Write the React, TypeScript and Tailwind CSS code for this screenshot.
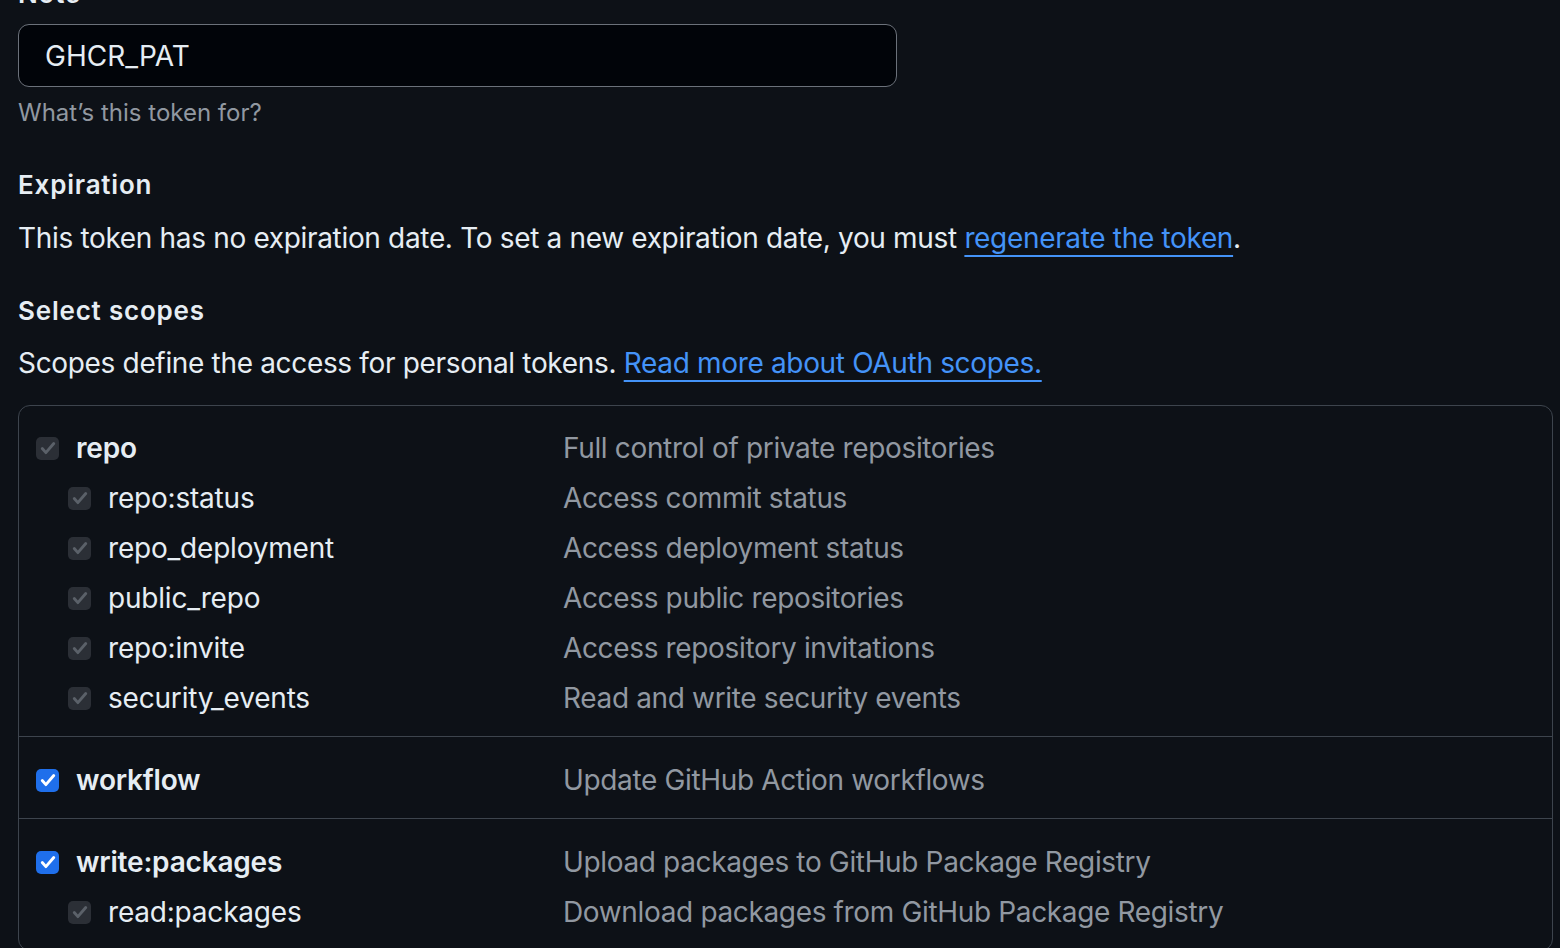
import React from "react";

interface Scope {
  name: string;
  description: string;
  checked: boolean;
  sub?: boolean;
}

const groups: Scope[][] = [
  [
    { name: "repo", description: "Full control of private repositories", checked: false },
    { name: "repo:status", description: "Access commit status", checked: false, sub: true },
    { name: "repo_deployment", description: "Access deployment status", checked: false, sub: true },
    { name: "public_repo", description: "Access public repositories", checked: false, sub: true },
    { name: "repo:invite", description: "Access repository invitations", checked: false, sub: true },
    { name: "security_events", description: "Read and write security events", checked: false, sub: true },
  ],
  [{ name: "workflow", description: "Update GitHub Action workflows", checked: true }],
  [
    { name: "write:packages", description: "Upload packages to GitHub Package Registry", checked: true },
    { name: "read:packages", description: "Download packages from GitHub Package Registry", checked: false, sub: true },
  ],
];

const Checkbox = ({ active }: { active: boolean }) => (
  <span
    className={
      active
        ? "flex h-[23px] w-[23px] shrink-0 items-center justify-center rounded-[5px] bg-[#1f6feb]"
        : "flex h-[23px] w-[23px] shrink-0 items-center justify-center rounded-[5px] bg-[#2b2f36]"
    }
  >
    <svg width="20" height="20" viewBox="0 0 16 16" fill="none">
      <path
        d="M3.4 8.4l2.9 3.3L12.6 4.4"
        stroke={active ? "#ffffff" : "#5b6169"}
        strokeWidth="2.3"
        strokeLinecap="round"
        strokeLinejoin="round"
      />
    </svg>
  </span>
);

const ScopeRow = ({ scope }: { scope: Scope }) => (
  <div className="flex h-[50px] items-center pl-[17px]">
    <div className={scope.sub ? "flex w-[527px] items-center pl-[32px]" : "flex w-[527px] items-center"}>
      <Checkbox active={scope.checked} />
      <span
        className={
          scope.sub
            ? "ml-[17px] text-[28px] leading-[50px] tracking-[-0.2px] text-[#e6edf3]"
            : "ml-[17px] text-[28px] font-semibold leading-[50px] tracking-[-0.2px] text-[#e6edf3]"
        }
      >
        {scope.name}
      </span>
    </div>
    <span className="text-[28px] leading-[50px] tracking-[-0.35px] text-[#9198a1]">{scope.description}</span>
  </div>
);

export default function App() {
  return (
    <div className="min-h-[948px] overflow-hidden bg-[#0d1117] pl-[18px] font-['Inter','Liberation_Sans',sans-serif] antialiased">
      <div className="-mt-[21px] text-[26px] font-semibold leading-[30px] tracking-[0.8px] text-[#e6edf3]">Note</div>

      <div className="mt-[15px] flex h-[63px] w-[879px] items-center rounded-[11px] border border-[#6b717a] bg-[#010409] pl-[26px]">
        <span className="text-[28px] text-[#e6edf3]">GHCR_PAT</span>
      </div>
      <div className="mt-[11px] text-[24px] leading-[30px] text-[#9198a1]">What’s this token for?</div>

      <div className="mt-[42px] text-[26px] font-semibold leading-[30px] tracking-[0.8px] text-[#e6edf3]">Expiration</div>
      <p className="mt-[20px] text-[28px] leading-[36px] tracking-[-0.33px] text-[#e6edf3]">
        This token has no expiration date. To set a new expiration date, you must{" "}
        <a className="text-[#4493f8] underline decoration-2 underline-offset-[7px]">regenerate the token</a>.
      </p>

      <div className="mt-[40px] text-[26px] font-semibold leading-[30px] tracking-[0.8px] text-[#e6edf3]">Select scopes</div>
      <p className="mt-[19px] text-[28px] leading-[36px] tracking-[-0.33px] text-[#e6edf3]">
        Scopes define the access for personal tokens.{" "}
        <a className="text-[#4493f8] underline decoration-2 underline-offset-[7px]">Read more about OAuth scopes.</a>
      </p>

      <div className="mt-[24px] mr-[7px] rounded-[12px] border border-[#3d444d]">
        {groups.map((group, i) => (
          <div
            key={i}
            className={i === 0 ? "pt-[17px] pb-[13px]" : "border-t border-[#3d444d] pt-[18px] pb-[13px]"}
          >
            {group.map((scope) => (
              <ScopeRow key={scope.name} scope={scope} />
            ))}
          </div>
        ))}
      </div>
    </div>
  );
}
